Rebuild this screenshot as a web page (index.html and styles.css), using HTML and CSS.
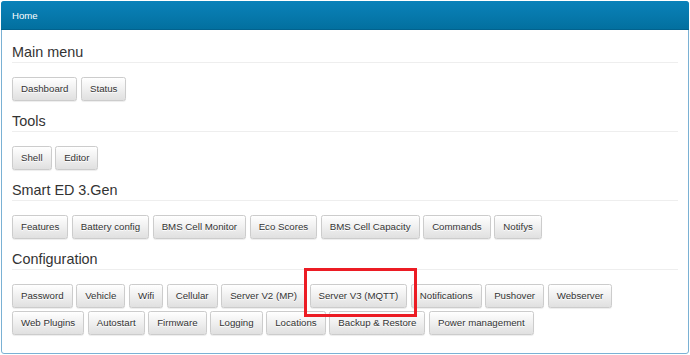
FILE: index.html
```html
<!DOCTYPE html>
<html lang="en">
<head>
  <meta charset="UTF-8" />
  <meta name="viewport" content="width=device-width, initial-scale=1.0" />
  <title>OVMS - Home</title>
  <link rel="stylesheet" href="styles.css">
</head>
<body>
  <div class="panel">
    <div class="panel-heading">Home</div>
    <div class="panel-body">
      <!-- Main menu -->
      <h4>Main menu</h4>
      <div class="menu">
        <a class="btn" href="#">Dashboard</a>
        <a class="btn" href="#">Status</a>
      </div>
      <!-- Tools -->
      <h4>Tools</h4>
      <div class="menu">
        <a class="btn" href="#">Shell</a>
        <a class="btn" href="#">Editor</a>
      </div>
      <!-- Vehicle plugin -->
      <h4>Smart ED 3.Gen</h4>
      <div class="menu">
        <a class="btn" href="#">Features</a>
        <a class="btn" href="#">Battery config</a>
        <a class="btn" href="#">BMS Cell Monitor</a>
        <a class="btn" href="#">Eco Scores</a>
        <a class="btn" href="#">BMS Cell Capacity</a>
        <a class="btn" href="#">Commands</a>
        <a class="btn" href="#">Notifys</a>
      </div>
      <!-- Configuration -->
      <h4>Configuration</h4>
      <div class="menu last">
        <a class="btn" href="#">Password</a>
        <a class="btn" href="#">Vehicle</a>
        <a class="btn" href="#">Wifi</a>
        <a class="btn" href="#">Cellular</a>
        <a class="btn" href="#">Server V2 (MP)</a>
        <a class="btn marked" href="#">Server V3 (MQTT)</a>
        <a class="btn" href="#">Notifications</a>
        <a class="btn" href="#">Pushover</a>
        <a class="btn" href="#">Webserver</a>
        <a class="btn" href="#">Web Plugins</a>
        <a class="btn" href="#">Autostart</a>
        <a class="btn" href="#">Firmware</a>
        <a class="btn" href="#">Logging</a>
        <a class="btn" href="#">Locations</a>
        <a class="btn" href="#">Backup &amp; Restore</a>
        <a class="btn" href="#">Power management</a>
      </div>
    </div>
  </div>
</body>
</html>
```

FILE: styles.css
```css
* {
  margin: 0;
  padding: 0;
  box-sizing: border-box;
}
body {
  font-family: 'Liberation Sans', Arial, Helvetica, sans-serif;
  background-color: #fff;
  color: #333;
  margin: 1px;
}
/* Panel */
.panel {
  border: 1px solid #7ab1d4;
  border-radius: 3px;
  background: #fff;
  height: 353px;
}
.panel-heading {
  margin: -1px -1px 0;
  padding: 8px 11px;
  height: 29px;
  font-size: 9.6px;
  line-height: 13px;
  color: #fff;
  background: linear-gradient(to bottom, #0a82ba, #03709f);
  border-bottom: 1px solid #02628e;
  border-radius: 3px 3px 0 0;
}
.panel-body {
  padding: 10px 10px 8px;
}
/* Section titles */
.panel-body h4 {
  padding: 4px 0 2px;
  font-size: 14.4px;
  font-weight: normal;
  line-height: 16px;
  border-bottom: 1px solid #eee;
}
/* Button rows */
.menu {
  display: flex;
  flex-wrap: wrap;
  gap: 3px 3.6px;
  margin: 14px 0 8px;
}
.btn {
  display: inline-block;
  height: 24px;
  padding: 4px 8px;
  font-size: 9.7px;
  line-height: 14px;
  color: #333;
  text-decoration: none;
  white-space: nowrap;
  text-shadow: 0 1px 0 #fff;
  background: linear-gradient(to bottom, #fff 0%, #e0e0e0 100%);
  border: 1px solid #ccc;
  border-radius: 2.4px;
  box-shadow: inset 0 1px 0 rgba(255,255,255,0.15), 0 1px 1px rgba(0,0,0,0.075);
}
/* Red annotation frame */
.btn.marked {
  position: relative;
}
.btn.marked::after {
  content: "";
  position: absolute;
  top: -17px;
  left: -7px;
  right: -11px;
  bottom: -10px;
  border: 3px solid #ec1c24;
}
```
